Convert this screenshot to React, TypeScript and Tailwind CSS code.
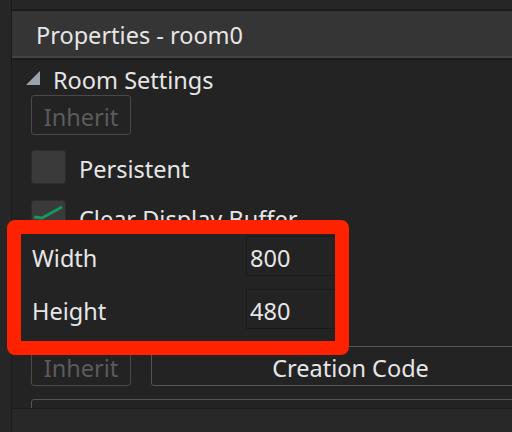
import React from "react";

function Checkbox({ checked }: { checked?: boolean }) {
  return (
    <div className="relative h-[34px] w-[35px] shrink-0 rounded-[3px] border border-[#2c2c2c] bg-[#3a3a3a]">
      {checked && (
        <svg className="absolute left-0 top-0" width="35" height="34" viewBox="0 0 35 34">
          <path d="M2 16 L10 17 L30 6" fill="none" stroke="#12995a" strokeWidth="3" />
        </svg>
      )}
    </div>
  );
}

function InheritButton() {
  return (
    <div className="flex h-[40px] w-[100px] shrink-0 items-center justify-center rounded-[3px] border border-[#494949] pt-[3px] text-[#5b5b5b]">
      Inherit
    </div>
  );
}

export default function App() {
  return (
    <div
      className="relative flex h-[432px] w-[512px] overflow-hidden bg-[#262626] text-[23.5px] leading-[28px] text-[#e6e6e6]"
      style={{ fontFamily: '"Noto Sans", "Open Sans", sans-serif' }}
    >
      <div className="w-[12px] shrink-0 border-r border-[#1c1c1c]" />
      <div className="flex min-w-0 flex-1 flex-col">
        <div className="h-[11px] shrink-0 border-b-2 border-[#1b1b1b] bg-[#262626]" />
        <div className="flex h-[47px] shrink-0 items-center border-b-2 border-[#444444] bg-[#353535] pl-[24px] pt-[3px]">
          Properties - room0
        </div>
        <div className="h-[2px] shrink-0 bg-[#1c1c1c]" />
        <div className="flex h-[349px] shrink-0 flex-col overflow-hidden border-b border-[#1a1a1a] bg-[#232323] pl-[19px]">
          <div className="mt-[4px] flex h-[28px] items-center">
            <svg width="15" height="15" viewBox="0 0 15 15" className="ml-[-5px] shrink-0">
              <polygon points="14,0 14,14 0,14" fill="#9aa2ab" />
            </svg>
            <span className="ml-[12px] pt-[3px]">Room Settings</span>
          </div>
          <div className="mt-[3px]">
            <InheritButton />
          </div>
          <div className="mt-[15px] flex h-[34px] items-center gap-[13px]">
            <Checkbox />
            <span className="pt-[3px]">Persistent</span>
          </div>
          <div className="mt-[16px] flex h-[34px] items-center gap-[13px]">
            <Checkbox checked />
            <span className="pt-[3px]">Clear Display Buffer</span>
          </div>
          <div className="mt-[2px] flex h-[40px] items-center">
            <span className="w-[215px] pl-[1px] pt-[3px]">Width</span>
            <div className="flex h-[40px] w-[100px] items-center border border-[#1a1a1a] bg-[#232323] pl-[3px] pt-[3px]">
              800
            </div>
          </div>
          <div className="mt-[13px] flex h-[40px] items-center">
            <span className="w-[215px] pl-[1px] pt-[3px]">Height</span>
            <div className="flex h-[40px] w-[100px] items-center border border-[#1a1a1a] bg-[#232323] pl-[3px] pt-[3px]">
              480
            </div>
          </div>
          <div className="mt-[17px] flex gap-[20px]">
            <InheritButton />
            <div className="flex h-[40px] w-[399px] shrink-0 items-center justify-center rounded-[3px] border border-[#555555] pt-[3px]">
              Creation Code
            </div>
          </div>
          <div className="mt-[13px] h-[40px] w-[520px] shrink-0 rounded-[3px] border border-[#555555]" />
        </div>
        <div className="flex-1 bg-[#282828]" />
      </div>
      <div className="pointer-events-none absolute left-[7px] top-[220px] h-[135px] w-[342px] rounded-[8px] border-[14px] border-[#fe2200]" />
    </div>
  );
}
